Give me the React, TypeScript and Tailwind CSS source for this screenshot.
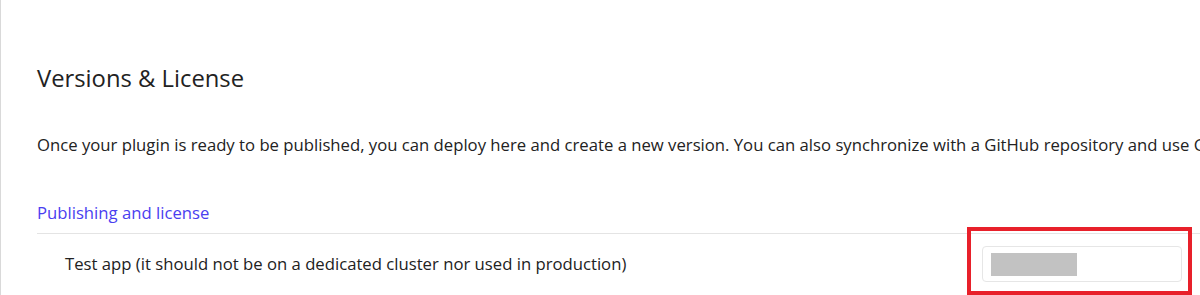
export default function App() {
  return (
    <div className="h-[295px] w-[1200px] overflow-hidden border-l border-[#d9d9d9] bg-white font-['Open_Sans',sans-serif] text-[#222]">
      <div className="pl-[36px]">
        {/* Header */}
        <h1 className="pt-[62px] text-[23.8px] leading-[32px] font-normal">Versions &amp; License</h1>
        <p className="mt-[39px] whitespace-nowrap text-[16.7px] leading-[24px]">
          Once your plugin is ready to be published, you can deploy here and create a new version. You can also synchronize with a GitHub repository and use GitHub Actions to deploy automatically.
        </p>

        {/* Section */}
        <div className="mt-[44px] text-[16.7px] leading-[24px] text-[#4a3ef0]">Publishing and license</div>
        <div className="mt-[8px] flex items-center justify-between border-t border-[#e4e4e4] pt-[12px] pl-[28px] pr-[18px]">
          <span className="text-[16.7px] leading-[24px]">Test app (it should not be on a dedicated cluster nor used in production)</span>
          <div className="relative flex h-[36px] w-[200px] items-center rounded-[4px] border border-[#e6e6e6] px-[8px]">
            <div className="h-[23px] w-[86px] bg-[#c2c2c2]" />
            <div className="absolute -left-[16px] -right-[11px] -top-[20px] -bottom-[14px] border-[4px] border-[#e8202a]" />
          </div>
        </div>
      </div>
    </div>
  );
}
